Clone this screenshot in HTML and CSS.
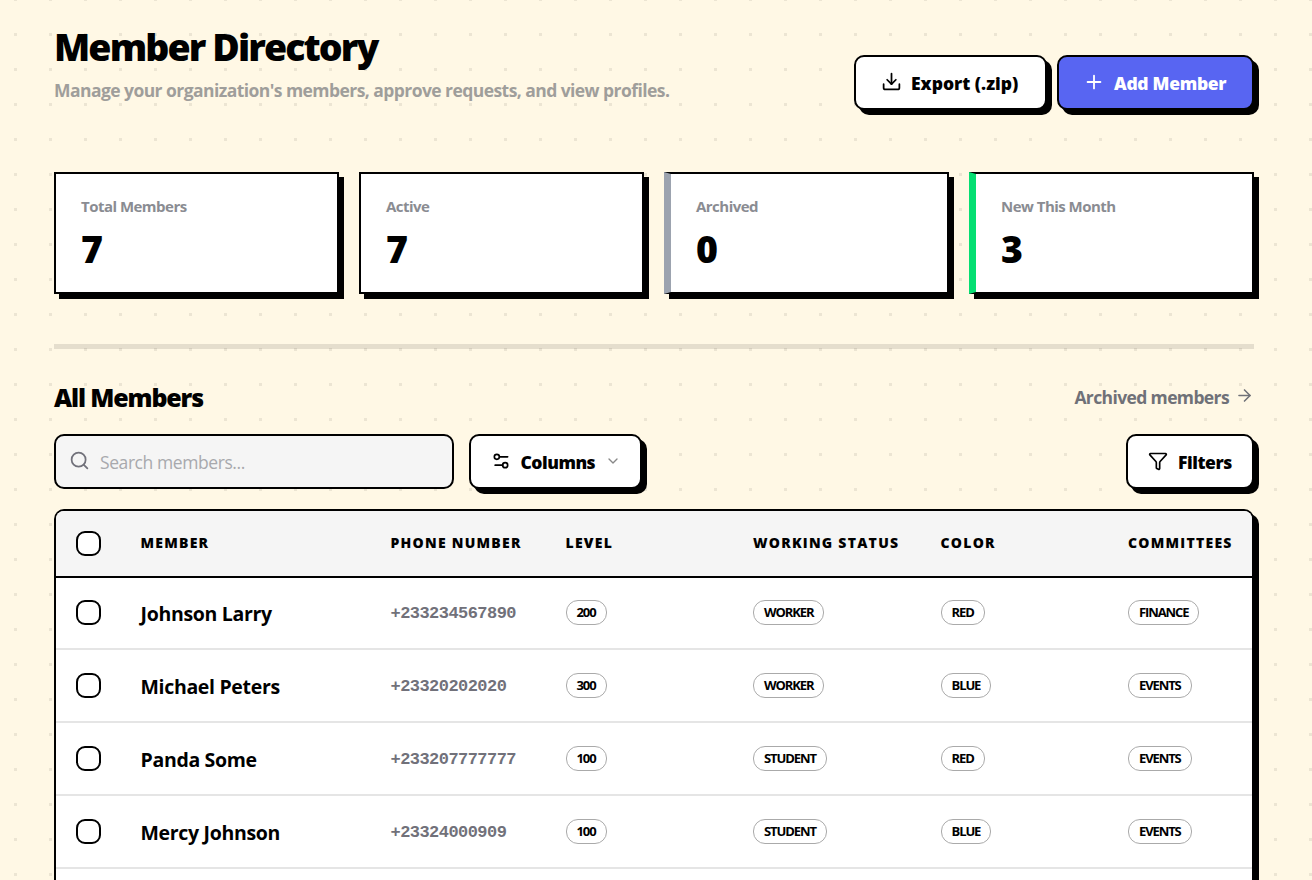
FILE: index.html
```html
<!DOCTYPE html>
<html lang="en">
    <head>
        <meta charset="UTF-8">
        <meta name="viewport" content="width=device-width, initial-scale=1.0">
        <title>Member Directory</title>
        <link rel="stylesheet" href="styles.css">
    </head>
    <body>
        <main class="container">
            <header class="page-header">
                <div>
                    <h1>Member Directory</h1>
                    <p class="subtitle">Manage your organization's members, approve requests, and view profiles.</p>
                </div>
                <div class="actions">
                    <button type="button" class="btn btn-export">
                        <svg class="icon" width="21" height="21" viewBox="0 0 24 24"><path d="M21 15v4a2 2 0 0 1-2 2H5a2 2 0 0 1-2-2v-4"/><path d="m7 10 5 5 5-5"/><path d="M12 15V3"/></svg>
                        <span>Export (.zip)</span>
                    </button>
                    <button type="button" class="btn btn-add">
                        <svg class="icon" width="22" height="22" viewBox="0 0 24 24"><path d="M5 12h14"/><path d="M12 5v14"/></svg>
                        <span>Add Member</span>
                    </button>
                </div>
            </header>

            <section class="stats">
                <div class="card">
                    <p class="card-label">Total Members</p>
                    <p class="card-value">7</p>
                </div>
                <div class="card">
                    <p class="card-label">Active</p>
                    <p class="card-value">7</p>
                </div>
                <div class="card card-archived">
                    <p class="card-label">Archived</p>
                    <p class="card-value">0</p>
                </div>
                <div class="card card-new">
                    <p class="card-label">New This Month</p>
                    <p class="card-value">3</p>
                </div>
            </section>

            <div class="divider"></div>

            <div class="list-header">
                <h2>All Members</h2>
                <a href="#" class="archived-link">
                    <span>Archived members</span>
                    <svg class="icon" width="19" height="19" viewBox="0 0 24 24"><path d="M5 12h14"/><path d="m12 5 7 7-7 7"/></svg>
                </a>
            </div>

            <div class="toolbar">
                <label class="search">
                    <svg class="icon" width="21" height="21" viewBox="0 0 24 24"><circle cx="11" cy="11" r="8"/><path d="m21 21-4.3-4.3"/></svg>
                    <input type="text" placeholder="Search members...">
                </label>
                <button type="button" class="btn btn-columns">
                    <svg class="icon" width="20" height="20" viewBox="0 0 24 24"><path d="M20 7h-9"/><path d="M14 17H5"/><circle cx="17" cy="17" r="3"/><circle cx="7" cy="7" r="3"/></svg>
                    <span>Columns</span>
                    <svg class="icon chevron" width="16" height="16" viewBox="0 0 24 24"><path d="m6 9 6 6 6-6"/></svg>
                </button>
                <button type="button" class="btn btn-filters">
                    <svg class="icon" width="20" height="20" viewBox="0 0 24 24"><path d="M10 20a1 1 0 0 0 .553.895l2 1A1 1 0 0 0 14 21v-7a2 2 0 0 1 .517-1.341L21.74 4.67A1 1 0 0 0 21 3H3a1 1 0 0 0-.742 1.67l7.225 7.989A2 2 0 0 1 10 14z"/></svg>
                    <span>Filters</span>
                </button>
            </div>

            <div class="table-box">
                <table>
                    <colgroup>
                        <col class="col-check">
                        <col class="col-member">
                        <col class="col-phone">
                        <col class="col-tag">
                        <col class="col-tag">
                        <col class="col-tag">
                        <col>
                    </colgroup>
                    <thead>
                        <tr>
                            <th><input type="checkbox"></th>
                            <th>Member</th>
                            <th>Phone Number</th>
                            <th>Level</th>
                            <th>Working Status</th>
                            <th>Color</th>
                            <th>Committees</th>
                        </tr>
                    </thead>
                    <tbody>
                        <tr>
                            <td><input type="checkbox"></td>
                            <td class="name">Johnson Larry</td>
                            <td class="phone">+233234567890</td>
                            <td><span class="tag">200</span></td>
                            <td><span class="tag">WORKER</span></td>
                            <td><span class="tag">RED</span></td>
                            <td><span class="tag">FINANCE</span></td>
                        </tr>
                        <tr>
                            <td><input type="checkbox"></td>
                            <td class="name">Michael Peters</td>
                            <td class="phone">+23320202020</td>
                            <td><span class="tag">300</span></td>
                            <td><span class="tag">WORKER</span></td>
                            <td><span class="tag">BLUE</span></td>
                            <td><span class="tag">EVENTS</span></td>
                        </tr>
                        <tr>
                            <td><input type="checkbox"></td>
                            <td class="name">Panda Some</td>
                            <td class="phone">+233207777777</td>
                            <td><span class="tag">100</span></td>
                            <td><span class="tag">STUDENT</span></td>
                            <td><span class="tag">RED</span></td>
                            <td><span class="tag">EVENTS</span></td>
                        </tr>
                        <tr>
                            <td><input type="checkbox"></td>
                            <td class="name">Mercy Johnson</td>
                            <td class="phone">+23324000909</td>
                            <td><span class="tag">100</span></td>
                            <td><span class="tag">STUDENT</span></td>
                            <td><span class="tag">BLUE</span></td>
                            <td><span class="tag">EVENTS</span></td>
                        </tr>
                    </tbody>
                </table>
            </div>
        </main>
    </body>
</html>
```
FILE: styles.css
```css
* {
    box-sizing: border-box;
}

body {
    margin: 0;
    height: 880px;
    overflow: hidden;
    font-family: "Open Sans", "Noto Sans", sans-serif;
    color: #000;
    background: conic-gradient(from 90deg at 32px 32px, #ece5d3 25%, #fff8e5 0) -18px 1px / 35px 35px;
}

h1,
h2,
p {
    margin: 0;
}

.container {
    display: flex;
    flex-direction: column;
    width: 1200px;
    height: 880px;
    margin-left: 54px;
    padding-top: 22px;
}

.page-header {
    display: flex;
    justify-content: space-between;
    height: 150px;
}

h1 {
    font-size: 37.5px;
    line-height: 50px;
    font-weight: 800;
    letter-spacing: -1.9px;
}

.subtitle {
    margin-top: 5px;
    font-size: 17.5px;
    line-height: 26px;
    font-weight: 700;
    letter-spacing: -0.56px;
    color: #9f9e9b;
}

.actions {
    display: flex;
    gap: 10px;
    padding-top: 33px;
}

.btn {
    display: flex;
    align-items: center;
    height: 55px;
    padding: 0 0 0 25px;
    border: 2px solid #000;
    border-radius: 10px;
    background-color: #fff;
    box-shadow: 5px 5px 0 #000;
    font-family: inherit;
    font-size: 17.5px;
    font-weight: 800;
    color: #000;
    white-space: nowrap;
    cursor: pointer;
}

.icon {
    flex: none;
    margin-bottom: 2px;
    fill: none;
    stroke: currentColor;
    stroke-width: 2;
    stroke-linecap: round;
    stroke-linejoin: round;
}

.btn-export {
    width: 193px;
    gap: 9px;
}

.btn-add {
    width: 197px;
    padding-left: 24px;
    gap: 9px;
    background-color: #5865f2;
    letter-spacing: -0.3px;
    color: #fff;
}

.stats {
    display: grid;
    grid-template-columns: repeat(4, 1fr);
    gap: 20px;
}

.card {
    height: 122px;
    padding: 21px 25px;
    border: 2px solid #000;
    background-color: #fff;
    box-shadow: 5px 5px 0 #000;
}

.card-archived {
    border-left: 7px solid #9ca3af;
}

.card-new {
    border-left: 7px solid #05df72;
}

.card-label {
    font-size: 15px;
    line-height: 22px;
    font-weight: 700;
    letter-spacing: -0.52px;
    color: #8a8c92;
}

.card-value {
    margin-top: 7px;
    font-size: 37.5px;
    line-height: 50px;
    font-weight: 800;
}

.divider {
    flex: none;
    height: 5px;
    margin-top: 50px;
    background-color: rgba(0, 0, 0, 0.1);
}

.list-header {
    display: flex;
    justify-content: space-between;
    align-items: center;
    height: 35px;
    margin-top: 31px;
}

h2 {
    font-size: 25px;
    line-height: 35px;
    font-weight: 800;
    letter-spacing: -1.15px;
}

.archived-link {
    display: flex;
    align-items: center;
    gap: 6px;
    padding-bottom: 2px;
    font-size: 17.5px;
    font-weight: 700;
    letter-spacing: -0.62px;
    color: #6f7178;
    text-decoration: none;
}

.toolbar {
    display: flex;
    gap: 15px;
    margin-top: 19px;
}

.search {
    display: flex;
    align-items: center;
    gap: 10px;
    width: 400px;
    height: 55px;
    padding-left: 13px;
    border: 2px solid #000;
    border-radius: 10px;
    background-color: #f5f5f5;
    color: #71717a;
}

.search input {
    flex: 1;
    min-width: 0;
    padding: 0;
    border: none;
    outline: none;
    background: none;
    font-family: inherit;
    font-size: 17.5px;
    letter-spacing: -0.42px;
}

.search input::placeholder {
    color: #a8a9ad;
}

.btn-columns {
    width: 173px;
    padding-left: 20px;
    gap: 9.5px;
    letter-spacing: -0.5px;
}

.chevron {
    color: #888;
}

.btn-filters {
    width: 128px;
    margin-left: auto;
    padding-left: 20px;
    gap: 10px;
    letter-spacing: -0.45px;
}

.table-box {
    flex: 1;
    margin-top: 20px;
    border: 2px solid #000;
    border-bottom: none;
    border-radius: 10px 10px 0 0;
    background-color: #fff;
    box-shadow: 5px 5px 0 #000;
    overflow: hidden;
}

table {
    width: 100%;
    table-layout: fixed;
    border-spacing: 0;
}

.col-check {
    width: 64.5px;
}

.col-member {
    width: 250px;
}

.col-phone {
    width: 175px;
}

.col-tag {
    width: 187.5px;
}

th {
    height: 67px;
    padding: 0 0 2px 20px;
    border-bottom: 2px solid #000;
    background-color: #f5f5f5;
    font-size: 14px;
    font-weight: 800;
    letter-spacing: 1.25px;
    text-align: left;
    text-transform: uppercase;
    white-space: nowrap;
}

th:first-child {
    padding-bottom: 0;
}

td {
    height: 73px;
    padding: 0 0 0 20px;
    border-bottom: 2px solid #e5e5e5;
}

tbody tr:first-child td {
    height: 72px;
    padding-bottom: 1px;
}

input[type="checkbox"] {
    display: block;
    width: 25px;
    height: 25px;
    margin: 0;
    appearance: none;
    border: 2px solid #000;
    border-radius: 9px;
    background-color: #fff;
}

td.name {
    padding-top: 2px;
    font-size: 19.5px;
    font-weight: 700;
    letter-spacing: -0.32px;
}

td.phone {
    padding-top: 1px;
    font-family: "Liberation Mono", monospace;
    font-size: 17px;
    font-weight: 700;
    letter-spacing: -0.55px;
    color: #71717a;
}

.tag {
    display: inline-block;
    height: 25px;
    padding: 0 10px;
    border: 1px solid #aaa;
    border-radius: 12px;
    font-size: 13px;
    line-height: 22px;
    font-weight: 700;
    letter-spacing: -1.1px;
    vertical-align: middle;
}
```
